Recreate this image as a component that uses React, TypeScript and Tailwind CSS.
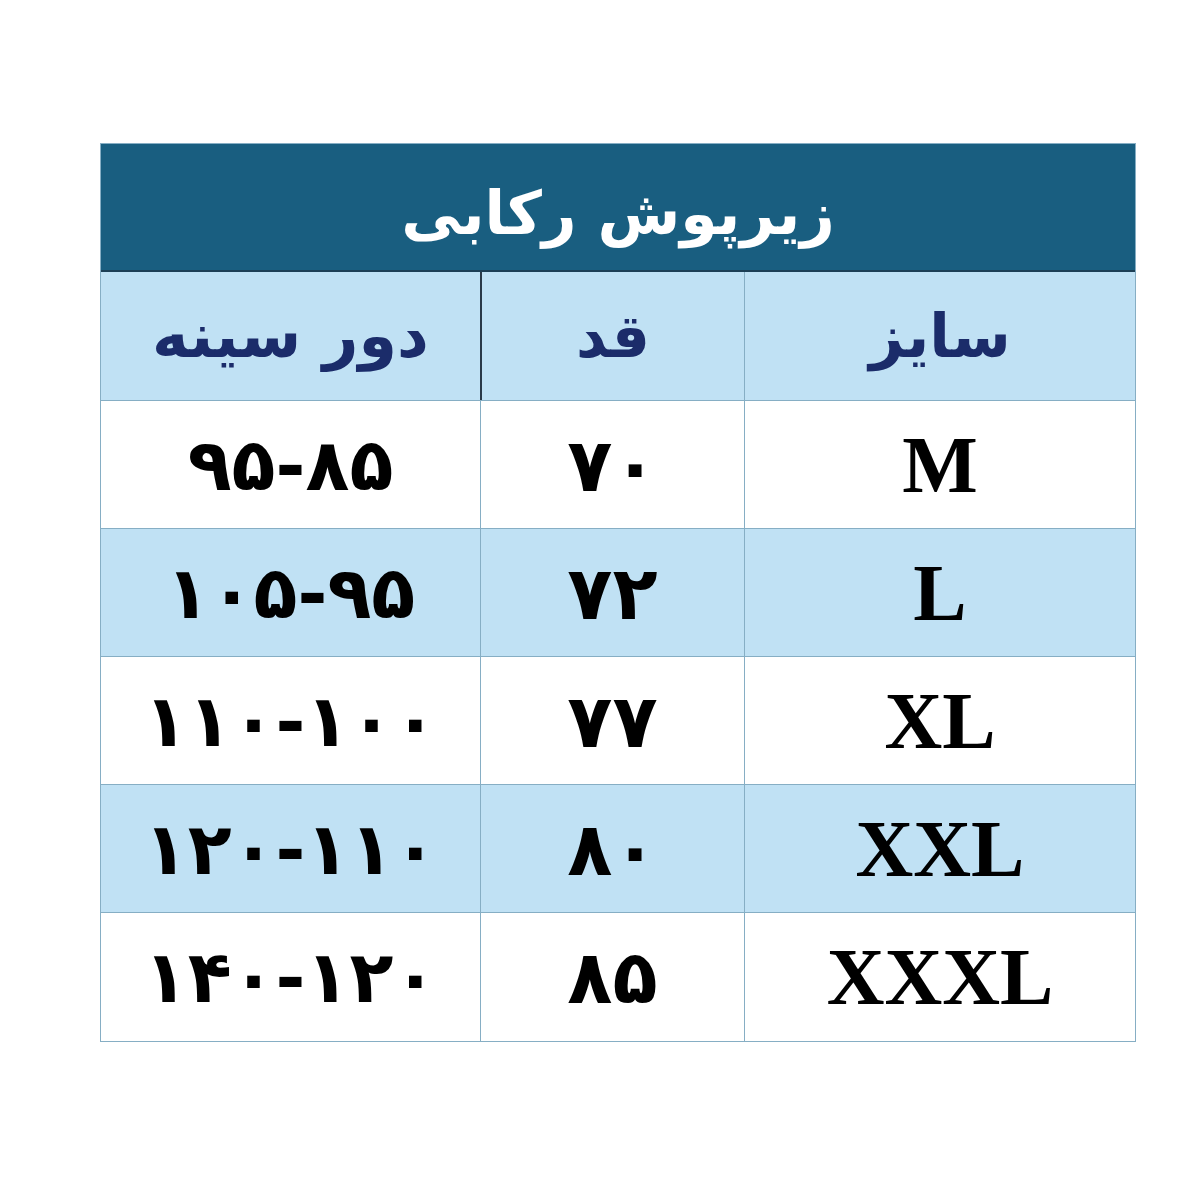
import React from "react";

const rows = [
  { size: "M", height: "۷۰", chest: "۹۵-۸۵", bg: "bg-white" },
  { size: "L", height: "۷۲", chest: "۱۰۵-۹۵", bg: "bg-[#c0e1f4]" },
  { size: "XL", height: "۷۷", chest: "۱۱۰-۱۰۰", bg: "bg-white" },
  { size: "XXL", height: "۸۰", chest: "۱۲۰-۱۱۰", bg: "bg-[#c0e1f4]" },
  { size: "XXXL", height: "۸۵", chest: "۱۴۰-۱۲۰", bg: "bg-white" },
];

const fa = "font-['DejaVu_Sans','Noto_Sans',sans-serif]";

const App = () => {
  return (
    <div className="w-[1200px] h-[1200px] bg-white pt-[143px] pl-[100px]">
      <div dir="rtl" className="w-[1036px] border border-[#86aec4]">
        <div className="h-[128px] bg-[#195e80] border-b-2 border-[#1d3f55] flex items-center justify-center">
          <p className={`${fa} text-[60px] font-bold text-white leading-none pt-3`}>زیرپوش رکابی</p>
        </div>
        <div className="grid grid-cols-[391px_264px_1fr] h-[129px] bg-[#c0e1f4] border-b border-[#86aec4]">
          <div className="flex items-center justify-center border-l border-[#86aec4]">
            <p className={`${fa} text-[60px] font-bold text-[#1b2c6a] leading-none`}>سایز</p>
          </div>
          <div className="flex items-center justify-center border-l-2 border-[#2a3a48]">
            <p className={`${fa} text-[60px] font-bold text-[#1b2c6a] leading-none`}>قد</p>
          </div>
          <div className="flex items-center justify-center">
            <p className={`${fa} text-[62px] font-bold text-[#1b2c6a] leading-none`}>دور سینه</p>
          </div>
        </div>
        {rows.map((r, i) => (
          <div
            key={r.size}
            className={`grid grid-cols-[391px_264px_1fr] h-[128px] ${r.bg} ${i < rows.length - 1 ? "border-b border-[#86aec4]" : ""}`}
          >
            <div className="flex items-center justify-center border-l border-[#86aec4]">
              <p className="font-['Liberation_Serif',serif] text-[80px] font-bold text-black leading-none">{r.size}</p>
            </div>
            <div className="flex items-center justify-center border-l border-[#86aec4]">
              <p className={`${fa} text-[74px] font-bold text-black leading-none tracking-[4px]`}>{r.height}</p>
            </div>
            <div className="flex items-center justify-center">
              <p dir="ltr" className={`${fa} text-[72px] font-bold text-black leading-none tracking-[4px]`}>{r.chest}</p>
            </div>
          </div>
        ))}
      </div>
    </div>
  );
};

export default App;
